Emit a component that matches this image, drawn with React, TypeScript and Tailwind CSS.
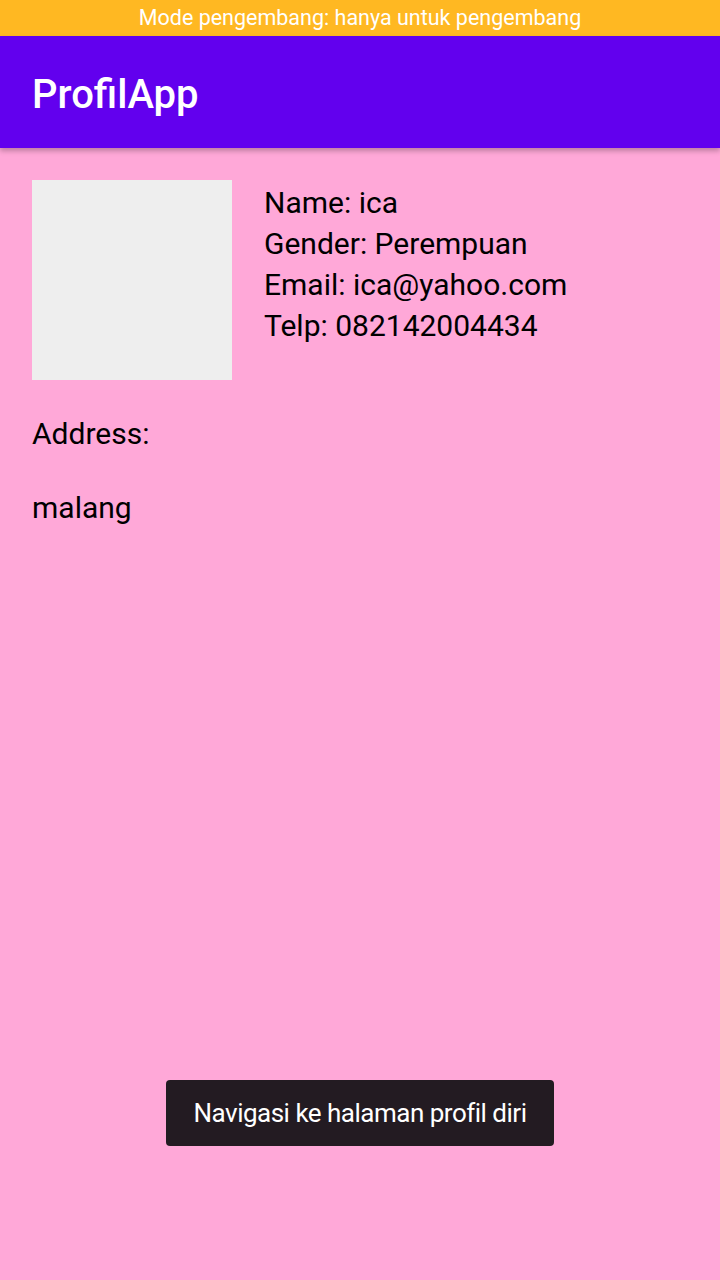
export default function App() {
  return (
    <div className="relative flex h-[1280px] w-[720px] flex-col bg-[#ffa8d8] font-['Roboto',sans-serif] text-black">
      <div className="flex h-[36px] items-center justify-center bg-[#ffb822] text-[21.5px] text-white">
        Mode pengembang: hanya untuk pengembang
      </div>
      <header className="relative z-10 flex h-[112px] items-center bg-[#6200ee] px-8 pt-[6px] shadow-[0_3px_5px_rgba(0,0,0,0.25)]">
        <h1 className="text-[40px] font-medium text-white">ProfilApp</h1>
      </header>

      <main className="flex flex-col px-8 pt-8">
        <div className="flex gap-8">
          <div className="h-[200px] w-[200px] shrink-0 bg-[#eeeeee]" />
          <div className="flex flex-col pt-[2px] text-[30px] leading-[41px]">
            <span>Name: ica</span>
            <span>Gender: Perempuan</span>
            <span>Email: ica@yahoo.com</span>
            <span>Telp: 082142004434</span>
          </div>
        </div>
        <p className="mt-[33px] text-[30px] leading-[41px]">Address:</p>
        <p className="mt-[33px] text-[30px] leading-[41px]">malang</p>
      </main>

      <div className="absolute left-[166px] top-[1080px] flex h-[66px] w-[388px] items-center justify-center rounded-[4px] bg-[#231b22] text-[26px] tracking-[-0.5px] text-white">
        Navigasi ke halaman profil diri
      </div>
    </div>
  );
}
